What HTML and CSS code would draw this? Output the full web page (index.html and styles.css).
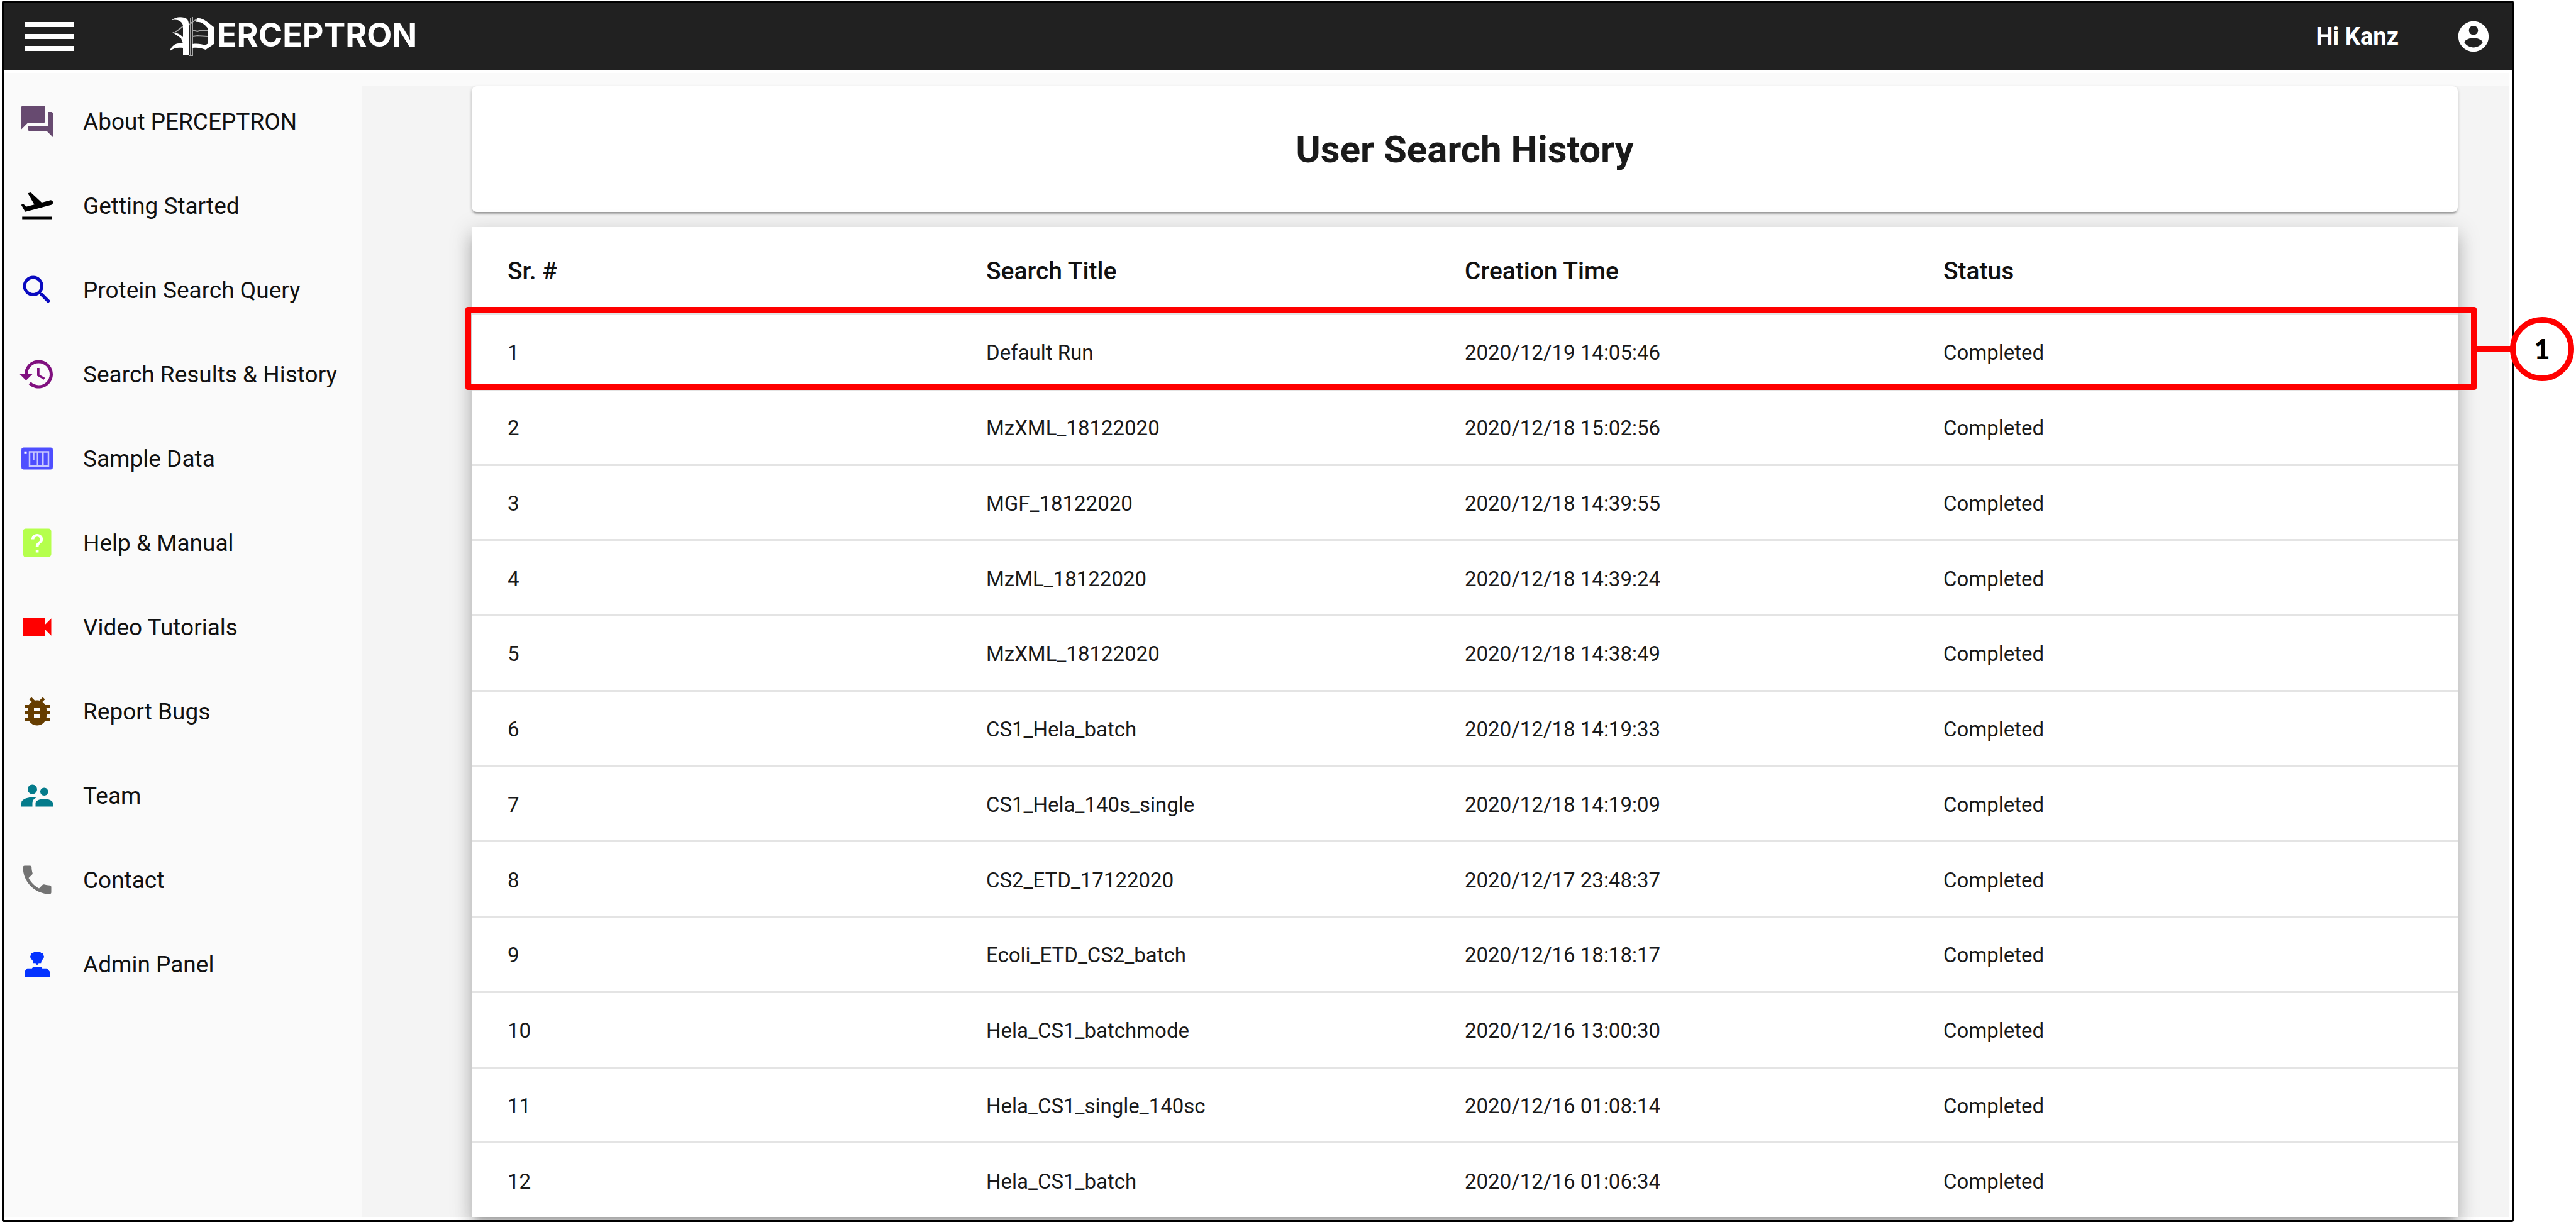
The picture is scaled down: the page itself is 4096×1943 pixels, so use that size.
FILE: index.html
```html
<!DOCTYPE html>
<html lang="en">
<head>
<meta charset="utf-8">
<title>Perceptron - User Search History</title>
<link rel="stylesheet" href="styles.css">
</head>
<body>
<div class="frame">
  <header class="topbar">
    <button class="menu-button" type="button" aria-label="Menu">
      <svg class="menu-icon" viewBox="0 0 78 46"><path d="M0 0h78v8H0zM0 19h78v8H0zM0 38h78v8H0z"/></svg>
    </button>
    <a class="brand" href="#" aria-label="Perceptron">
      <svg class="brand-mark" viewBox="0 0 72 64">
        <path d="M4 6C10 0 23 0 28 4c2 2 3 5 3 8v50h-9V50c-8-1-15 0-21 5 2-7 8-12 14-12l7 0-3-8-14-10c7 1 12 3 17 8V15C21 7 12 4 4 6z"/>
        <path d="M45 3c9-1 17 7 26 14v27L58 53c-7-3-13-4-21-3v-6c8-1 15 0 20 2l5-3V20C57 13 51 8 42 9z"/>
        <path class="brand-line" d="M37 1v61h-6M34 3v58M31 14l6-5 8-5M37 22l8 2 6-2 10 1M37 32l8-1 16 1M10 25l12-9"/>
      </svg>
      <span class="brand-name">ERCEPTRON</span>
    </a>
    <span class="greeting">Hi Kanz</span>
    <button class="account-button" type="button" aria-label="Account">
      <svg class="account-icon" viewBox="0 0 24 24"><path d="M12 2C6.480 2 2 6.480 2 12s4.480 10 10 10 10-4.480 10-10S17.520 2 12 2zm0 3c1.660 0 3 1.340 3 3s-1.340 3-3 3-3-1.340-3-3 1.340-3 3-3zm0 14.200c-2.500 0-4.710-1.280-6-3.220.030-1.990 4-3.080 6-3.080 1.990 0 5.970 1.090 6 3.080-1.290 1.940-3.500 3.220-6 3.220z"/></svg>
    </button>
  </header>
  <div class="content">
    <nav class="sidebar">
      <a class="nav-item" href="#"><svg class="nav-icon about" viewBox="0 0 24 24"><path d="M21 6h-2v9H6v2c0 .55.45 1 1 1h11l4 4V7c0-.55-.45-1-1-1zm-4 6V3c0-.55-.45-1-1-1H3c-.55 0-1 .45-1 1v14l4-4h10c.55 0 1-.45 1-1z"/></svg>About PERCEPTRON</a>
      <a class="nav-item" href="#"><svg class="nav-icon start" viewBox="0 0 24 24"><path d="M2.500 19h19v2h-19zm19.570-9.360c-.21-.8-1.040-1.280-1.840-1.060L14.920 10l-6.900-6.430-1.930.51 4.140 7.170-4.970 1.330-1.970-1.540-1.450.39 1.820 3.160.77 1.330 1.600-.43 5.310-1.420 4.350-1.160L21 11.490c.81-.23 1.280-1.050 1.070-1.850z"/></svg>Getting Started</a>
      <a class="nav-item" href="#"><svg class="nav-icon query" viewBox="0 0 24 24"><path d="M15.500 14h-.79l-.28-.27C15.410 12.590 16 11.110 16 9.500 16 5.910 13.090 3 9.500 3S3 5.910 3 9.500 5.910 16 9.500 16c1.610 0 3.090-.59 4.230-1.570l.27.28v.79l5 4.990L20.490 19l-4.990-5zm-6 0C7.010 14 5 11.990 5 9.500S7.010 5 9.500 5 14 7.010 14 9.500 11.990 14 9.500 14z"/></svg>Protein Search Query</a>
      <a class="nav-item" href="#"><svg class="nav-icon results" viewBox="0 0 24 24"><path d="M13 3c-4.970 0-9 4.030-9 9H1l3.890 3.890.07.14L9 12H6c0-3.870 3.130-7 7-7s7 3.130 7 7-3.130 7-7 7c-1.930 0-3.680-.79-4.940-2.060l-1.420 1.420C8.270 19.990 10.510 21 13 21c4.970 0 9-4.030 9-9s-4.030-9-9-9zm-1 5v5l4.280 2.540.72-1.210-3.500-2.080V8H12z"/></svg>Search Results &amp; History</a>
      <a class="nav-item" href="#"><svg class="nav-icon sample" viewBox="0 0 24 24"><rect x="2" y="5" width="20" height="14" rx="1.500"/><path class="sample-lines" d="M7.200 7.800h12v9h-12zM9.800 7.800v5M12.300 7.800v9M15.700 7.800v9"/><path class="sample-dot" d="M3.800 7.500h1.600v1.600H3.800z"/></svg>Sample Data</a>
      <a class="nav-item" href="#"><svg class="nav-icon help" viewBox="0 0 24 24"><rect x="3" y="3" width="18" height="18" rx="1.800"/><path class="help-mark" transform="translate(1 2.200) scale(.92 .84)" d="M13 19h-2v-2h2v2zm2.070-7.750l-.9.920C13.450 12.900 13 13.500 13 15h-2v-.5c0-1.100.45-2.100 1.170-2.830l1.240-1.260c.37-.36.59-.86.59-1.410 0-1.100-.9-2-2-2s-2 .9-2 2H8c0-2.210 1.790-4 4-4s4 1.790 4 4c0 .88-.36 1.680-.93 2.250z"/></svg>Help &amp; Manual</a>
      <a class="nav-item" href="#"><svg class="nav-icon video" viewBox="0 0 24 24"><path d="M17 10.500V7c0-.55-.45-1-1-1H4c-.55 0-1 .45-1 1v10c0 .55.45 1 1 1h12c.55 0 1-.45 1-1v-3.500l4 4v-11l-4 4z"/></svg>Video Tutorials</a>
      <a class="nav-item" href="#"><svg class="nav-icon bugs" viewBox="0 0 24 24"><path d="M20 8h-2.810c-.45-.78-1.070-1.450-1.820-1.960L17 4.410 15.590 3l-2.170 2.170C12.960 5.060 12.490 5 12 5c-.49 0-.96.06-1.410.17L8.410 3 7 4.410l1.620 1.630C7.880 6.550 7.260 7.220 6.810 8H4v2h2.090c-.05.33-.09.66-.09 1v1H4v2h2v1c0 .34.04.67.09 1H4v2h2.810c1.040 1.790 2.970 3 5.190 3s4.150-1.210 5.190-3H20v-2h-2.090c.05-.33.09-.66.09-1v-1h2v-2h-2v-1c0-.34-.04-.67-.09-1H20V8zm-6 8h-4v-2h4v2zm0-4h-4v-2h4v2z"/></svg>Report Bugs</a>
      <a class="nav-item" href="#"><svg class="nav-icon team" viewBox="0 0 24 24"><path d="M16.500 12c1.380 0 2.490-1.120 2.490-2.500S17.880 7 16.500 7C15.120 7 14 8.120 14 9.500s1.120 2.500 2.500 2.500zM9 11c1.660 0 2.990-1.340 2.990-3S10.660 5 9 5C7.340 5 6 6.340 6 8s1.340 3 3 3zm7.500 3c-1.830 0-5.500.92-5.500 2.750V19h11v-2.250c0-1.830-3.670-2.750-5.500-2.750zM9 13c-2.330 0-7 1.170-7 3.500V19h7v-2.250c0-.85.33-2.340 2.370-3.470C10.500 13.100 9.660 13 9 13z"/></svg>Team</a>
      <a class="nav-item" href="#"><svg class="nav-icon contact" viewBox="0 0 24 24"><path d="M6.620 10.790c1.440 2.830 3.760 5.140 6.590 6.590l2.200-2.200c.27-.27.67-.36 1.020-.24 1.120.37 2.330.57 3.570.57.55 0 1 .45 1 1V20c0 .55-.45 1-1 1-9.390 0-17-7.610-17-17 0-.55.45-1 1-1h3.500c.55 0 1 .45 1 1 0 1.250.2 2.450.57 3.570.11.35.03.74-.25 1.020l-2.200 2.200z"/></svg>Contact</a>
      <a class="nav-item" href="#"><svg class="nav-icon admin" viewBox="0 0 24 24"><path d="M10.300 4h3.400l1.100 1.200h.8l.9 2.200-.9 1.500-.8.900-.3 1.500h-1.500l-1 1.400-1-1.400H9.500l-.3-1.500-.8-.9-.9-1.500.9-2.200h.8zM9.500 13.700h5l.8 1h3l1.700 2V20H4v-3.300l1.700-2h3z"/></svg>Admin Panel</a>
    </nav>
    <main class="main">
      <section class="card title-card"><h1 class="title">User Search History</h1></section>
      <section class="card table-card">
        <table class="history">
          <thead>
            <tr><th>Sr. #</th><th>Search Title</th><th>Creation Time</th><th>Status</th></tr>
          </thead>
          <tbody>
            <tr class="marked"><td>1</td><td>Default Run</td><td>2020/12/19 14:05:46</td><td>Completed<div class="callout"><span class="callout-number">1</span></div></td></tr>
            <tr><td>2</td><td>MzXML_18122020</td><td>2020/12/18 15:02:56</td><td>Completed</td></tr>
            <tr><td>3</td><td>MGF_18122020</td><td>2020/12/18 14:39:55</td><td>Completed</td></tr>
            <tr><td>4</td><td>MzML_18122020</td><td>2020/12/18 14:39:24</td><td>Completed</td></tr>
            <tr><td>5</td><td>MzXML_18122020</td><td>2020/12/18 14:38:49</td><td>Completed</td></tr>
            <tr><td>6</td><td>CS1_Hela_batch</td><td>2020/12/18 14:19:33</td><td>Completed</td></tr>
            <tr><td>7</td><td>CS1_Hela_140s_single</td><td>2020/12/18 14:19:09</td><td>Completed</td></tr>
            <tr><td>8</td><td>CS2_ETD_17122020</td><td>2020/12/17 23:48:37</td><td>Completed</td></tr>
            <tr><td>9</td><td>Ecoli_ETD_CS2_batch</td><td>2020/12/16 18:18:17</td><td>Completed</td></tr>
            <tr><td>10</td><td>Hela_CS1_batchmode</td><td>2020/12/16 13:00:30</td><td>Completed</td></tr>
            <tr><td>11</td><td>Hela_CS1_single_140sc</td><td>2020/12/16 01:08:14</td><td>Completed</td></tr>
            <tr><td>12</td><td>Hela_CS1_batch</td><td>2020/12/16 01:06:34</td><td>Completed</td></tr>
          </tbody>
        </table>
      </section>
    </main>
  </div>
</div>
</body>
</html>
```
FILE: styles.css
```css
* {
  box-sizing: border-box;
}

body {
  margin: 0;
  min-height: 100vh;
  padding: 1px 99px 0 3px;
  display: flex;
  background: #fff;
  color: #1a1a1a;
  font-family: Roboto, "Liberation Sans", sans-serif;
}

button {
  border: 0;
  padding: 0;
  background: none;
  color: inherit;
  font: inherit;
}

svg {
  display: block;
  fill: currentColor;
}

.frame {
  flex: 1;
  display: flex;
  flex-direction: column;
  border: 3px solid #000;
  border-radius: 3px;
}

/* Top bar */

.topbar {
  display: flex;
  align-items: center;
  height: 108px;
  padding: 0 32px 0 33px;
  background: #212121;
  color: #fff;
}

.menu-icon {
  width: 78px;
  height: 46px;
}

.brand {
  display: flex;
  align-items: center;
  gap: 4px;
  margin: 0 auto 0 152px;
  color: inherit;
  text-decoration: none;
}

.brand-mark {
  width: 72px;
  height: 64px;
}

.brand-line {
  fill: none;
  stroke: currentColor;
  stroke-opacity: .6;
  stroke-width: 2;
}

.brand-name {
  font-family: Inter, "Liberation Sans", sans-serif;
  font-size: 52px;
  font-weight: 700;
  line-height: 60px;
  padding-bottom: 4px;
}

.greeting {
  font-size: 38px;
  font-weight: 700;
}

.account-button {
  margin-left: 90px;
}

.account-icon {
  width: 58px;
  height: 58px;
}

/* Page body */

.content {
  flex: 1;
  display: flex;
  border: solid #fff;
  border-width: 4px 5px 5px 0;
  background: #fafafa;
}

.sidebar {
  width: 569px;
  padding-top: 10px;
}

.nav-item {
  display: flex;
  align-items: center;
  gap: 43px;
  height: 134px;
  padding-left: 23px;
  color: #111;
  font-size: 37px;
  text-decoration: none;
  white-space: nowrap;
}

.nav-icon {
  flex: none;
  width: 60px;
  height: 60px;
}

.about { color: #674a70; }
.start { color: #000; }
.query { color: #0a0ac0; }
.results { color: #80107f; }
.sample { color: #4e4eff; }
.help { color: #b5ff4d; }
.video { color: #f00; }
.bugs { color: #663d00; }
.team { color: #047b8b; }
.contact { color: #737373; }
.admin { color: #0433ff; }

.sample-lines {
  fill: none;
  stroke: #c8c8ff;
  stroke-width: 1;
}

.sample-dot,
.help-mark {
  fill: #fff;
}

.main {
  flex: 1;
  display: flex;
  flex-direction: column;
  gap: 24px;
  margin-top: 21px;
  padding: 0 81px 0 175px;
  background: #f4f4f4;
}

.card {
  background: #fff;
}

.title-card {
  padding: 61px 60px 59px;
  border-radius: 8px;
  box-shadow: 0 5px 3px -2px rgba(0, 0, 0, .2), 0 2px 5px rgba(0, 0, 0, .25);
}

.title {
  margin: 0;
  color: #1a1a1a;
  font-size: 60px;
  font-weight: 700;
  line-height: 80px;
  text-align: center;
}

.table-card {
  flex: 1;
  display: flex;
  box-shadow: 0 12px 12px -7px rgba(0, 0, 0, .2), 0 19px 24px 2px rgba(0, 0, 0, .14), 0 7px 33px 5px rgba(0, 0, 0, .12);
}

/* History table */

.history {
  flex: 1;
  display: flex;
  flex-direction: column;
  font-size: 33px;
}

.history thead {
  display: block;
}

.history tbody {
  flex: 1;
  display: flex;
  flex-direction: column;
}

.history tr {
  display: grid;
  grid-template-columns: repeat(4, 1fr);
  align-items: center;
  padding: 3px 57px 0;
  border-bottom: 3px solid #e4e4e4;
}

.history tbody tr {
  flex: 1;
}

.history tbody tr:last-child {
  border-bottom: 0;
}

.history th {
  padding: 0;
  color: #111;
  font-size: 39px;
  font-weight: 500;
  line-height: 134px;
  text-align: left;
}

.history td {
  padding: 0;
}

/* Numbered marker around a row */

.history .marked {
  position: relative;
}

.callout {
  position: absolute;
  inset: -13px -30px -2px -10px;
  border: 9px solid #f00;
  border-radius: 4px;
}

.callout::after {
  content: "";
  position: absolute;
  top: 53px;
  left: 100%;
  width: 66px;
  height: 9px;
  background: #f00;
}

.callout-number {
  position: absolute;
  z-index: 1;
  top: 7px;
  right: -164px;
  width: 102px;
  height: 102px;
  border: 9px solid #f00;
  border-radius: 50%;
  background: #fff;
  color: #000;
  font-family: Lato, "Liberation Sans", sans-serif;
  font-size: 43px;
  font-weight: 900;
  line-height: 84px;
  text-align: center;
}
```
